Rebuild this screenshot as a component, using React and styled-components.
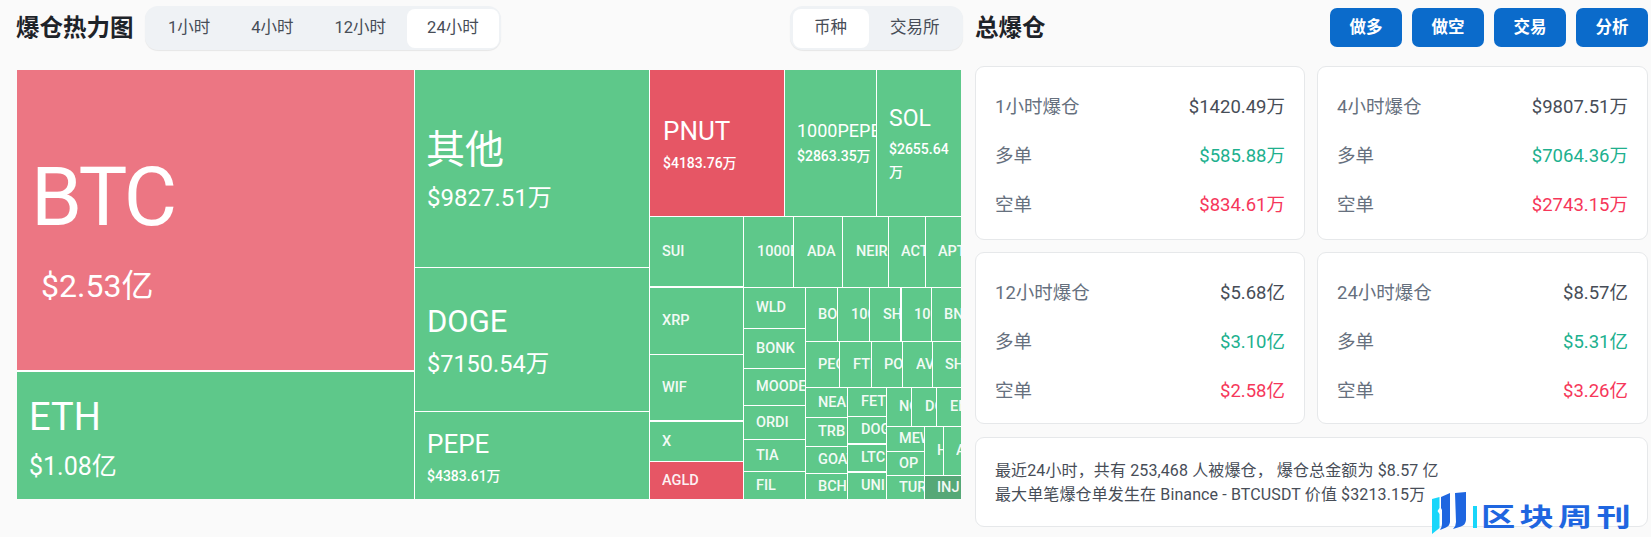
import React from "react";
import styled, { createGlobalStyle } from "styled-components";

const FONT = `Roboto, "Noto Sans CJK SC", sans-serif`;

const Global = createGlobalStyle`
  html, body { margin: 0; padding: 0; background: #fafafa; }
  body { font-family: ${FONT}; overflow: hidden; }
  * { box-sizing: border-box; }
`;

const Page = styled.div`
  position: relative;
  width: 1651px;
  height: 537px;
  display: flex;
  gap: 12px;
  padding: 6px 3px 0 17px;
  background: #fafafa;
`;
const LeftColumn = styled.section`
  width: 946px;
  flex: none;
`;
const RightColumn = styled.section`
  flex: 1;
  min-width: 0;
`;
const HeaderBar = styled.header`
  display: flex;
  align-items: center;
  height: 44px;
  margin-bottom: 20px;
`;
const Heading = styled.h2`
  margin: 0 0 0 ${(p) => p.$ml || 0}px;
  font-size: 23.5px;
  line-height: 44px;
  font-weight: 700;
  color: #1e2329;
  white-space: nowrap;
`;
const Segmented = styled.div`
  display: flex;
  height: 44px;
  padding: 3px 2px 3px 3px;
  margin-left: ${(p) => p.$ml || 0}px;
  background: #eff2f5;
  border-radius: 13px;
  box-shadow: 0 1px 1px rgba(0, 0, 0, 0.08);
`;
const Segment = styled.div`
  height: 39px;
  padding: 0 ${(p) => (p.$wide ? 21.5 : 20.5)}px;
  font-size: 16.5px;
  line-height: 38px;
  color: #474d57;
  border-radius: 8px;
  white-space: nowrap;
  background: ${(p) => (p.$active ? "#fff" : "transparent")};
`;
const Spacer = styled.div`
  flex: 1;
`;
const TreeMap = styled.div`
  position: relative;
  width: 944px;
  height: 429px;
  background: #fff;
  overflow: hidden;
`;
const COLORS = { g: "#5ec88a", d: "#56a877", r: "#e65665", p: "#ec7683" };
const Cell = styled.div.attrs((p) => ({
  style: {
    left: p.$x0 - 17,
    top: p.$y0 - 70,
    width: p.$x1 - p.$x0,
    height: p.$y1 - p.$y0,
  },
}))`
  position: absolute;
  display: flex;
  flex-direction: column;
  justify-content: ${(p) => (p.$pt != null ? "flex-start" : "center")};
  padding: ${(p) => p.$pt || 0}px ${(p) => p.$pr || 0}px 0 ${(p) => p.$pl}px;
  background: ${(p) => COLORS[p.$c]};
  color: #fff;
  overflow: hidden;
`;
const Name = styled.div`
  font-size: ${(p) => p.$size || 14.5}px;
  line-height: ${(p) => p.$lh || 20}px;
  font-weight: ${(p) => (p.$size ? 400 : 500)};
  letter-spacing: ${(p) => p.$ls || 0}px;
  white-space: nowrap;
  opacity: ${(p) => (p.$size ? 1 : 0.92)};
`;
const Price = styled.div`
  font-size: ${(p) => p.$size}px;
  line-height: ${(p) => p.$lh}px;
  font-weight: ${(p) => p.$w || 400};
  margin-top: ${(p) => p.$mt}px;
  margin-left: ${(p) => p.$ml || 0}px;
`;
const TitleRow = styled.div`
  display: flex;
  align-items: center;
  gap: 10px;
  height: 44px;
  margin-bottom: 16px;
`;
const ActionButton = styled.button`
  width: 72px;
  height: 39px;
  margin-top: -2px;
  border: 0;
  border-radius: 7px;
  background: #0b6bcb;
  color: #fff;
  font-family: ${FONT};
  font-size: 16.5px;
  font-weight: 700;
  padding: 0 0 3px;
`;
const CardGrid = styled.div`
  display: grid;
  grid-template-columns: 330px 331px;
  grid-template-rows: 174px 172px 91px;
  column-gap: 12px;
  row-gap: 12px;
`;
const Card = styled.article`
  background: #fff;
  border: 1px solid #e6e8ea;
  border-radius: 9px;
  padding: 13px 19px 0;
`;
const StatRow = styled.div`
  display: flex;
  justify-content: space-between;
  align-items: center;
  height: 49px;
  font-size: 18.5px;
`;
const StatLabel = styled.span`
  color: #66707e;
`;
const STAT = { base: "#474d57", up: "#20b08e", down: "#f6375a" };
const StatValue = styled.span`
  color: ${(p) => STAT[p.$tone]};
`;
const SummaryCard = styled(Card)`
  grid-column: 1 / 3;
  padding: 21px 19px 0;
  font-size: 16px;
  line-height: 23.5px;
  letter-spacing: 0.12px;
  color: #474d57;
  margin-top: 1px;
`;
const Watermark = styled.div`
  position: absolute;
  left: 1431px;
  top: 492px;
  display: flex;
  align-items: center;
  color: #1f66e0;
`;
const WatermarkBar = styled.span`
  width: 4px;
  height: 22px;
  margin: 6px 4px 0 6px;
  background: #19d6fa;
`;
const WatermarkText = styled.span`
  display: inline-block;
  margin-top: 5px;
  font-size: 29px;
  line-height: 34px;
  font-weight: 700;
  letter-spacing: 3.6px;
  white-space: nowrap;
  transform: scale(1.18, 0.88);
  transform-origin: left center;
`;

const big = [
  { n: "BTC", p: "$2.53亿", c: "p", x0: 17, y0: 70, x1: 414, y1: 370, pl: 14, pt: 82, ns: 82, nl: 90, ls: -2.5, ps: 32, pw: 40, mt: 24, ml: 10 },
  { n: "ETH", p: "$1.08亿", c: "g", x0: 17, y0: 372, x1: 414, y1: 499, pl: 12, pt: 23, ns: 38, nl: 44, ps: 25, pw: 30, mt: 13 },
  { n: "其他", p: "$9827.51万", c: "g", x0: 415, y0: 70, x1: 649, y1: 267, pl: 11, pt: 57, ns: 39, nl: 46, ps: 24, pw: 30, mt: 10, ml: 1 },
  { n: "DOGE", p: "$7150.54万", c: "g", x0: 415, y0: 268, x1: 649, y1: 411, pl: 12, pt: 35, ns: 31, nl: 38, ps: 23.5, pw: 28, mt: 9 },
  { n: "PEPE", p: "$4383.61万", c: "g", x0: 415, y0: 412, x1: 649, y1: 499, pl: 12, pt: 16, ns: 26, nl: 32, ps: 14, pw: 18, mt: 7, w: 500 },
  { n: "PNUT", p: "$4183.76万", c: "r", x0: 650, y0: 70, x1: 784, y1: 216, pl: 13, pt: 45, ns: 26, nl: 32, ps: 14, pw: 20, mt: 6, w: 500 },
  { n: "1000PEPE", p: "$2863.35万", c: "g", x0: 785, y0: 70, x1: 876, y1: 216, pl: 12, pt: 50, ns: 18, nl: 22, ps: 14, pw: 20, mt: 4, w: 500 },
  { n: "SOL", p: "$2655.64万", c: "g", x0: 877, y0: 70, x1: 961, y1: 216, pl: 12, pr: 4, pt: 35, ns: 23, nl: 28, ps: 14, pw: 23, mt: 5, w: 500 },
];

const small = [
  ["SUI", "g", 650, 217, 743, 286, 12],
  ["1000BONK", "g", 744, 217, 793, 287, 13],
  ["ADA", "g", 794, 217, 842, 287, 13],
  ["NEIRO", "g", 843, 217, 888, 287, 13],
  ["ACT", "g", 889, 217, 925, 287, 12],
  ["APT", "g", 926, 217, 961, 287, 12],
  ["XRP", "g", 650, 288, 743, 354, 12],
  ["WIF", "g", 650, 355, 743, 420, 12],
  ["X", "g", 650, 422, 743, 461, 12],
  ["AGLD", "r", 650, 462, 743, 499, 12],
  ["WLD", "g", 744, 288, 805, 328, 12],
  ["BONK", "g", 744, 329, 805, 368, 12],
  ["MOODENG", "g", 744, 369, 805, 405, 12],
  ["ORDI", "g", 744, 406, 805, 439, 12],
  ["TIA", "g", 744, 440, 805, 471, 12],
  ["FIL", "g", 744, 472, 805, 499, 12],
  ["BOME", "g", 806, 288, 837, 341, 12],
  ["1000", "g", 838, 288, 869, 341, 13],
  ["SHIB", "g", 870, 288, 900, 341, 13],
  ["1000", "g", 902, 288, 931, 341, 12],
  ["BNB", "g", 932, 288, 961, 341, 12],
  ["PEOPLE", "g", 806, 342, 839, 387, 12],
  ["FTM", "g", 840, 342, 871, 387, 13],
  ["POL", "g", 872, 342, 902, 387, 12],
  ["AVAX", "g", 903, 342, 932, 387, 13],
  ["SHELL", "g", 933, 342, 961, 387, 12],
  ["NEAR", "g", 806, 388, 847, 417, 12],
  ["TRB", "g", 806, 418, 847, 446, 12],
  ["GOAT", "g", 806, 447, 847, 473, 12],
  ["BCH", "g", 806, 474, 847, 499, 12],
  ["FET", "g", 848, 388, 886, 416, 13],
  ["DOGS", "g", 848, 417, 886, 443, 13],
  ["LTC", "g", 848, 445, 886, 471, 13],
  ["UNI", "g", 848, 473, 886, 499, 13],
  ["NOT", "g", 887, 388, 911, 426, 12],
  ["DOT", "g", 912, 388, 936, 426, 13],
  ["ENA", "g", 937, 388, 961, 426, 13],
  ["MEW", "g", 887, 427, 924, 451, 12],
  ["OP", "g", 887, 452, 924, 475, 12],
  ["TURBO", "g", 887, 476, 924, 499, 12],
  ["HBAR", "g", 925, 427, 943, 475, 12],
  ["ARB", "g", 944, 427, 961, 475, 12],
  ["INJ", "d", 925, 476, 961, 499, 12],
];

const cards = [
  ["1小时爆仓", "$1420.49万", "$585.88万", "$834.61万"],
  ["4小时爆仓", "$9807.51万", "$7064.36万", "$2743.15万"],
  ["12小时爆仓", "$5.68亿", "$3.10亿", "$2.58亿"],
  ["24小时爆仓", "$8.57亿", "$5.31亿", "$3.26亿"],
];

const LogoMark = () => (
  <svg width="36" height="44" viewBox="0 0 36 44">
    <path d="M1 7 L8.5 5 V16 L6.5 19 L8.5 22 V36 L1 42 Z" fill="#19d6fa" />
    <path d="M10 5 L19 1 V30 Q18.5 34 15 35.5 L9 38 Q11 35 11 32 V18 L10 16 Z" fill="#1f66e0" />
    <path d="M24 1 L35 0 V28 Q34.5 33 30 34.5 L22 37 Q25 34 25 30 Z" fill="#1f66e0" />
  </svg>
);

export default function App() {
  return (
    <Page>
      <Global />
      <LeftColumn>
        <HeaderBar>
          <Heading $ml={-1}>爆仓热力图</Heading>
          <Segmented $ml={11}>
            <Segment>1小时</Segment>
            <Segment>4小时</Segment>
            <Segment>12小时</Segment>
            <Segment $active>24小时</Segment>
          </Segmented>
          <Spacer />
          <Segmented>
            <Segment $active $wide>币种</Segment>
            <Segment $wide>交易所</Segment>
          </Segmented>
        </HeaderBar>
        <TreeMap>
          {big.map((b) => (
            <Cell key={b.n} $x0={b.x0} $y0={b.y0} $x1={b.x1} $y1={b.y1} $c={b.c} $pl={b.pl} $pr={b.pr} $pt={b.pt}>
              <Name $size={b.ns} $lh={b.nl} $ls={b.ls}>{b.n}</Name>
              <Price $size={b.ps} $lh={b.pw} $mt={b.mt} $ml={b.ml} $w={b.w}>{b.p}</Price>
            </Cell>
          ))}
          {small.map(([n, c, x0, y0, x1, y1, pl]) => (
            <Cell key={n + x0 + y0} $x0={x0} $y0={y0} $x1={x1} $y1={y1} $c={c} $pl={pl}>
              <Name>{n}</Name>
            </Cell>
          ))}
        </TreeMap>
      </LeftColumn>
      <RightColumn>
        <TitleRow>
          <Heading>总爆仓</Heading>
          <Spacer />
          <ActionButton>做多</ActionButton>
          <ActionButton>做空</ActionButton>
          <ActionButton>交易</ActionButton>
          <ActionButton>分析</ActionButton>
        </TitleRow>
        <CardGrid>
          {cards.map(([title, total, long, short]) => (
            <Card key={title}>
              <StatRow>
                <StatLabel>{title}</StatLabel>
                <StatValue $tone="base">{total}</StatValue>
              </StatRow>
              <StatRow>
                <StatLabel>多单</StatLabel>
                <StatValue $tone="up">{long}</StatValue>
              </StatRow>
              <StatRow>
                <StatLabel>空单</StatLabel>
                <StatValue $tone="down">{short}</StatValue>
              </StatRow>
            </Card>
          ))}
          <SummaryCard>
            <div>最近24小时，共有 253,468 人被爆仓， 爆仓总金额为 $8.57 亿</div>
            <div>最大单笔爆仓单发生在 Binance - BTCUSDT 价值 $3213.15万</div>
          </SummaryCard>
        </CardGrid>
      </RightColumn>
      <Watermark>
        <LogoMark />
        <WatermarkBar />
        <WatermarkText>区块周刊</WatermarkText>
      </Watermark>
    </Page>
  );
}
